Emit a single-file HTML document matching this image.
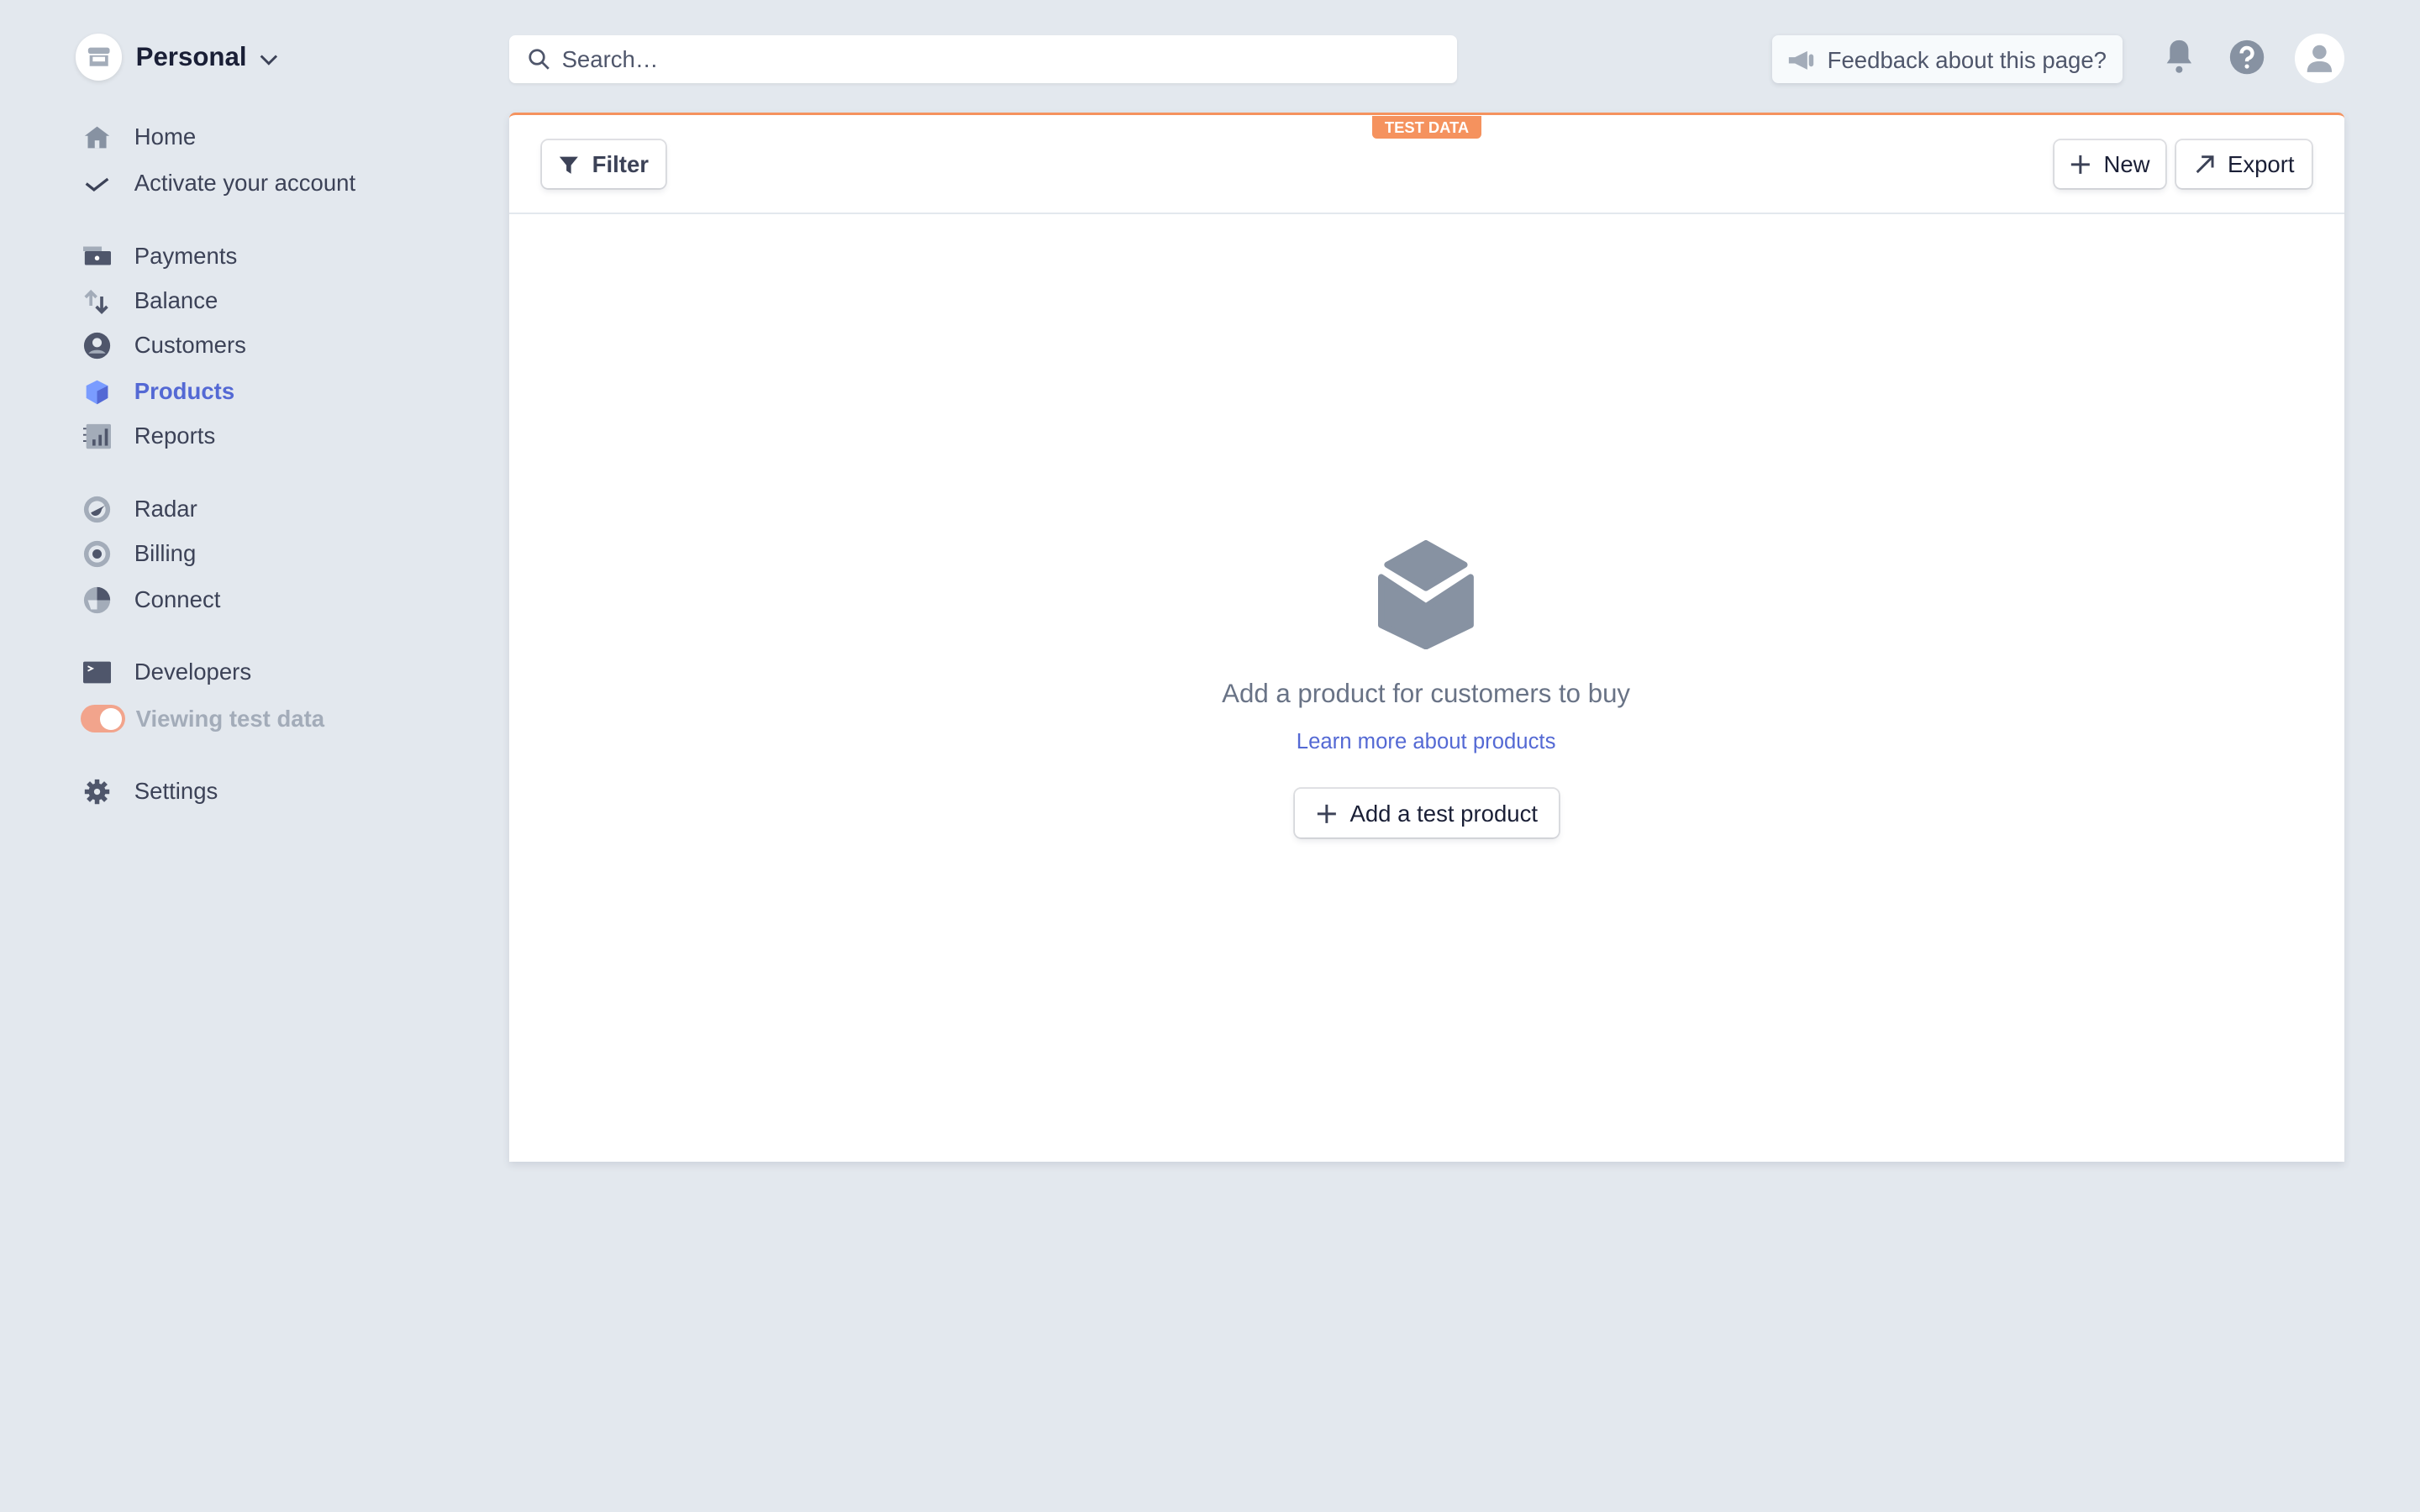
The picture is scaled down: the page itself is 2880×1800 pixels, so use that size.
<!DOCTYPE html>
<html><head><meta charset="utf-8"><style>
*{box-sizing:border-box;margin:0;padding:0}
html,body{width:2880px;height:1800px;overflow:hidden;background:#e3e8ee}
#z{zoom:1.83673;width:1568px;height:980px;position:relative;font-family:"Liberation Sans","DejaVu Sans",sans-serif;color:#3c4257}
.a{position:absolute}
.nav{position:absolute;left:54px;display:flex;align-items:center;font-size:15px;line-height:20px;height:20px}
.nav svg{width:18px;height:18px;margin-right:15px}
.btn{position:absolute;background:#fff;border-radius:4px;box-shadow:0 0 0 1px rgba(60,66,87,.16),0 2px 4px rgba(60,66,87,.12);display:flex;align-items:center;justify-content:center;font-size:15px;font-weight:bold;color:#3c4257}
.btn svg{margin-right:8px}
</style></head><body><div id="z">
<div class="a" style="left:49px;top:22px;width:30px;height:30px;border-radius:50%;background:#fff;box-shadow:0 1px 3px rgba(0,0,0,.1)"></div>
<svg class="a" style="left:56px;top:29px" width="16" height="16" viewBox="0 0 16 16"><rect x="1" y="2" width="14" height="4" rx="1.5" fill="#a3acb9"/><rect x="2" y="7" width="12" height="7" fill="#a3acb9"/><rect x="4" y="8" width="8" height="3" fill="#fff"/></svg>
<div class="a" style="left:88px;top:27px;font-size:17px;font-weight:bold;color:#1a1f36">Personal</div>
<svg class="a" style="left:167px;top:33px" width="14" height="10" viewBox="0 0 14 10"><path d="M2 3l5 5 5-5" stroke="#3c4257" stroke-width="1.6" fill="none"/></svg>

<div class="nav" style="top:79px"><svg viewBox="0 0 18 18"><path d="M9 2L1 8h2v8h12V8h2z" fill="#8792a2"/><rect x="7.5" y="11" width="3" height="5" fill="#e3e8ee"/></svg>Home</div>
<div class="nav" style="top:109px"><svg viewBox="0 0 18 18"><path d="M2 9l5 4 9-7" stroke="#3c4257" stroke-width="1.8" fill="none"/></svg>Activate your account</div>
<div class="nav" style="top:156px"><svg viewBox="0 0 18 18"><rect x="0" y="3" width="12" height="3" fill="#a3acb9"/><rect x="1" y="6" width="17" height="9" rx="1" fill="#4f566b"/><circle cx="9" cy="10.5" r="1.5" fill="#fff"/></svg>Payments</div>
<div class="nav" style="top:185px"><svg viewBox="0 0 18 18"><path d="M5 12V3M1.5 6.5L5 3l3.5 3.5" stroke="#a3acb9" stroke-width="2" fill="none"/><path d="M12 6v10M8.5 12.5L12 16l3.5-3.5" stroke="#4f566b" stroke-width="2" fill="none"/></svg>Balance</div>
<div class="nav" style="top:214px"><svg viewBox="0 0 18 18"><circle cx="9" cy="9" r="8.5" fill="#4f566b"/><circle cx="9" cy="7" r="3" fill="#e3e8ee"/><path d="M3.5 14c2-3 9-3 11 0" fill="#a3acb9"/></svg>Customers</div>
<div class="nav" style="top:244px;color:#5469d4;font-weight:bold"><svg viewBox="0 0 18 18"><path d="M2 5l7-3.5L16 5v8l-7 4-7-4z" fill="#7a9cff"/><path d="M9 8.5L16 5v8l-7 4z" fill="#5469d4"/></svg>Products</div>
<div class="nav" style="top:273px"><svg viewBox="0 0 18 18"><rect x="2" y="1" width="16" height="16" rx="1" fill="#a3acb9"/><rect x="6" y="11" width="2" height="4" fill="#4f566b"/><rect x="10" y="8" width="2" height="7" fill="#4f566b"/><rect x="14" y="4" width="2" height="11" fill="#4f566b"/><path d="M0 4h2M0 8h2M0 12h2" stroke="#4f566b"/></svg>Reports</div>
<div class="nav" style="top:320px"><svg viewBox="0 0 18 18"><circle cx="9" cy="9" r="8.5" fill="#a3acb9"/><circle cx="9" cy="9" r="5.5" fill="#e3e8ee"/><path d="M5 11c1 3 6 3 7-2 1-2 3-3 3-3z" fill="#4f566b"/></svg>Radar</div>
<div class="nav" style="top:349px"><svg viewBox="0 0 18 18"><circle cx="9" cy="9" r="8.5" fill="#a3acb9"/><circle cx="9" cy="9" r="5.5" fill="#e3e8ee"/><circle cx="9" cy="9" r="3" fill="#4f566b"/></svg>Billing</div>
<div class="nav" style="top:379px"><svg viewBox="0 0 18 18"><circle cx="9" cy="9" r="8.5" fill="#a3acb9"/><path d="M9 .5a8.5 8.5 0 0 1 8.5 8.5H9z" fill="#4f566b"/><path d="M3 9h6v6H5z" fill="#e3e8ee"/></svg>Connect</div>
<div class="nav" style="top:426px"><svg viewBox="0 0 18 18"><rect x="0" y="2" width="18" height="14" rx="1" fill="#4f566b"/><path d="M3 5l3 1.5L3 8" stroke="#fff" stroke-width="1" fill="none"/></svg>Developers</div>
<div class="nav" style="top:456px;left:52px;color:#a3acb9;font-weight:bold"><div style="width:29px;height:18px;border-radius:9px;background:#f2a48c;position:relative;margin-right:7px"><div style="position:absolute;right:2px;top:2px;width:14px;height:14px;border-radius:50%;background:#fff"></div></div>Viewing test data</div>
<div class="nav" style="top:503px"><svg viewBox="0 0 18 18"><g stroke="#4f566b" stroke-width="3"><path d="M9 1v16M1 9h16M3.3 3.3l11.4 11.4M14.7 3.3L3.3 14.7"/></g><circle cx="9" cy="9" r="5.5" fill="#4f566b"/><circle cx="9" cy="9" r="2" fill="#e3e8ee"/></svg>Settings</div>

<div class="a" style="left:330px;top:23px;width:614px;height:31px;background:#fff;border-radius:4px;box-shadow:0 1px 2px rgba(0,0,0,.06)"></div>
<svg class="a" style="left:342px;top:31px" width="15" height="15" viewBox="0 0 15 15"><circle cx="6" cy="6" r="4.5" stroke="#4f566b" stroke-width="1.5" fill="none"/><path d="M9.5 9.5l4 4" stroke="#4f566b" stroke-width="1.5"/></svg>
<div class="a" style="left:364px;top:30px;font-size:15px;color:#4f566b">Search…</div>

<div class="a" style="left:1148px;top:23px;width:227px;height:31px;background:#f7fafc;border-radius:4px;box-shadow:0 1px 3px rgba(60,66,87,.15);display:flex;align-items:center;padding-left:10px;padding-top:1px;font-size:15px;color:#4f566b">
<svg width="18" height="14" viewBox="0 0 18 14" style="margin-right:8px"><path d="M1 5h4l8-4v12L5 9H1z" fill="#a3acb9"/><rect x="14" y="3" width="3" height="8" rx="1.5" fill="#a3acb9"/></svg>Feedback about this page?</div>
<svg class="a" style="left:1402px;top:25px" width="20" height="24" viewBox="0 0 20 24"><path d="M10 1c-4 0-6 3-6 6v6l-2 3h16l-2-3V7c0-3-2-6-6-6z" fill="#8792a2"/><circle cx="10" cy="20" r="2.2" fill="#8792a2"/></svg>
<svg class="a" style="left:1444px;top:25px" width="24" height="24" viewBox="0 0 24 24"><circle cx="12" cy="12" r="11" fill="#8792a2"/><path d="M8.5 9.5a3.5 3.5 0 1 1 4.5 3.3c-1 .4-1 1-1 2" stroke="#fff" stroke-width="2.4" fill="none"/><circle cx="12" cy="18" r="1.4" fill="#fff"/></svg>
<div class="a" style="left:1487px;top:22px;width:32px;height:32px;border-radius:50%;background:#fff"></div>
<svg class="a" style="left:1493px;top:28px" width="20" height="20" viewBox="0 0 20 20"><circle cx="10" cy="6" r="4.5" fill="#a3acb9"/><path d="M2 19c0-5 3-7 8-7s8 2 8 7z" fill="#a3acb9"/></svg>

<div class="a" style="left:330px;top:73px;width:1189px;height:680px;background:#fff;border-top:2px solid #f5925e;border-radius:4px 4px 0 0;box-shadow:0 2px 5px rgba(60,66,87,.12)"></div>
<div class="a" style="left:889px;top:75px;width:71px;height:15px;background:#f5925e;border-radius:0 0 3px 3px;color:#fff;font-size:10px;font-weight:bold;text-align:center;line-height:15px">TEST DATA</div>
<div class="a" style="left:330px;top:138px;width:1189px;height:1px;background:#e3e8ee"></div>
<div class="btn" style="left:351px;top:91px;width:80px;height:31px"><svg width="14" height="14" viewBox="0 0 14 14"><path d="M1 2h12L8.5 7.5V13l-3-2V7.5z" fill="#3c4257"/></svg>Filter</div>
<div class="btn" style="left:1331px;top:91px;width:72px;height:31px;font-weight:normal;color:#1a1f36"><svg width="14" height="14" viewBox="0 0 14 14"><path d="M7 1v12M1 7h12" stroke="#3c4257" stroke-width="1.6"/></svg>New</div>
<div class="btn" style="left:1410px;top:91px;width:88px;height:31px;font-weight:normal;color:#1a1f36"><svg width="14" height="14" viewBox="0 0 14 14"><path d="M2 12L12 2M5 2h7v7" stroke="#3c4257" stroke-width="1.6" fill="none"/></svg>Export</div>

<svg class="a" style="left:893px;top:350px" width="62" height="71" viewBox="0 0 62 71"><path d="M31 2L56 16 31 31 6 16z" fill="#8792a2" stroke="#8792a2" stroke-width="4" stroke-linejoin="round"/><path d="M2 24L31 43 60 24V55L31 69 2 55z" fill="#8792a2" stroke="#8792a2" stroke-width="4" stroke-linejoin="round"/></svg>
<div class="a" style="left:630px;top:440px;width:588px;text-align:center;font-size:17px;color:#697386">Add a product for customers to buy</div>
<div class="a" style="left:630px;top:473px;width:588px;text-align:center;font-size:14px;color:#5469d4">Learn more about products</div>
<div class="btn" style="left:839px;top:511px;width:171px;height:32px;font-weight:normal;color:#1a1f36;padding-top:1px"><svg width="14" height="14" viewBox="0 0 14 14"><path d="M7 1v12M1 7h12" stroke="#3c4257" stroke-width="1.6"/></svg>Add a test product</div>
</div></body></html>
